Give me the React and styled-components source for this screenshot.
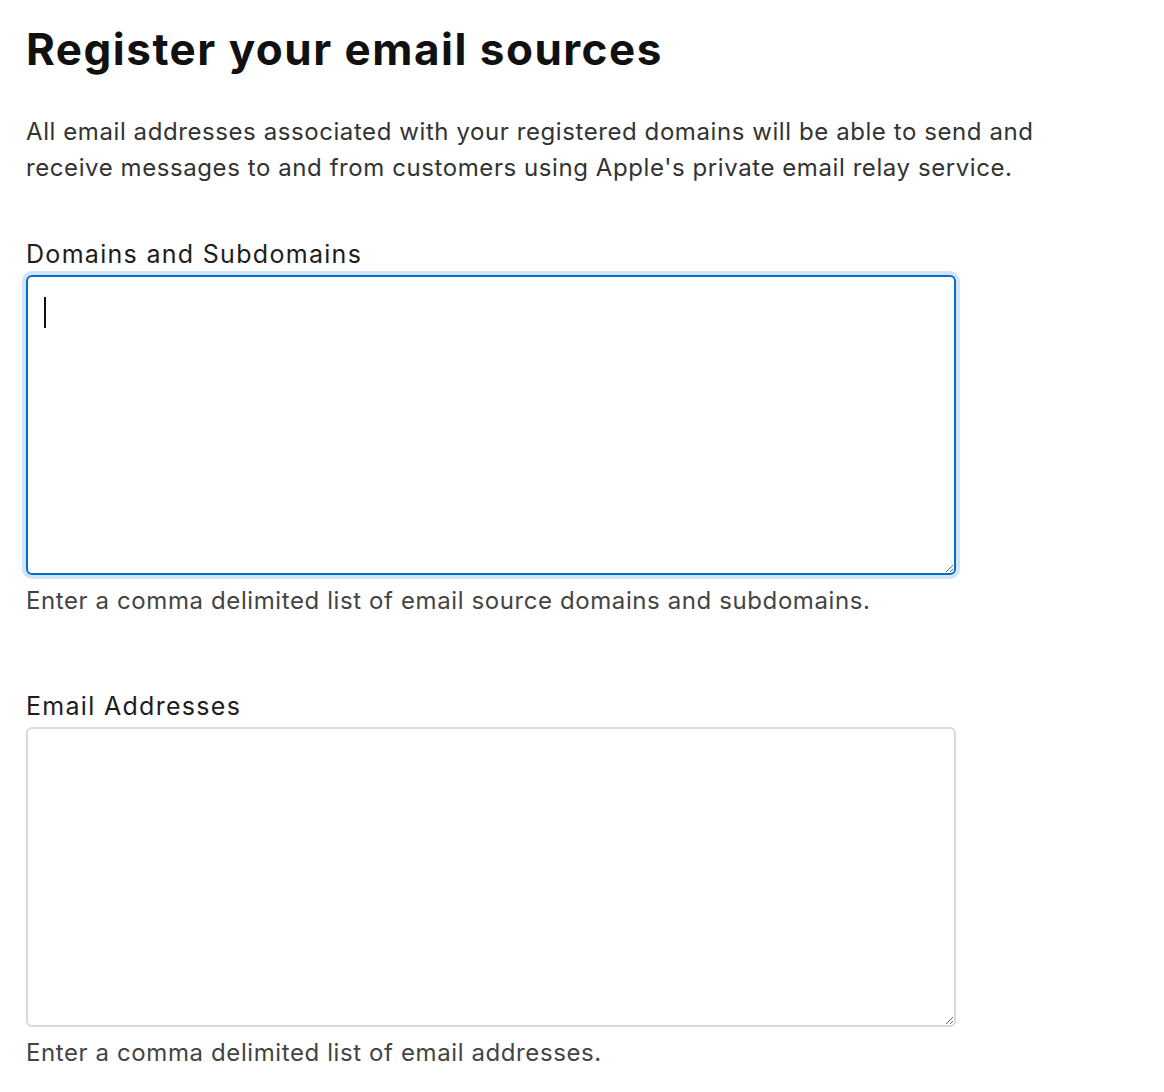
import React from 'react'
import styled, { createGlobalStyle } from 'styled-components'

const GlobalStyle = createGlobalStyle`
    body {
        margin: 0;
        background: #fff;
        font-family: Inter, "Noto Sans", sans-serif;
        -webkit-font-smoothing: antialiased;
    }
`;

function Field({ label, hint, focused }) {
    return (
        <FieldBlock>
            <Label>{label}</Label>
            <AreaWrap>
                <TextArea focused={focused} />
                {focused && <Caret />}
            </AreaWrap>
            <Hint>{hint}</Hint>
        </FieldBlock>
    )
}

export default function App() {
    return (
        <>
            <GlobalStyle />
            <Page>
                <Title>Register your email sources</Title>
                <Intro>
                    All email addresses associated with your registered domains will be able to send and
                    receive messages to and from customers using Apple's private email relay service.
                </Intro>
                <Field
                    label="Domains and Subdomains"
                    hint="Enter a comma delimited list of email source domains and subdomains."
                    focused
                />
                <Field
                    label="Email Addresses"
                    hint="Enter a comma delimited list of email addresses."
                />
            </Page>
        </>
    )
}

const Page = styled.div`
    padding: 22px 0 0 26px;
    width: 930px;
`;

const Title = styled.h1`
    margin: 0;
    font-size: 44px;
    line-height: 54px;
    font-weight: 700;
    color: #111;
    letter-spacing: 1.5px;
`;

const Intro = styled.p`
    margin: 38px 0 0;
    width: 1050px;
    font-size: 24px;
    line-height: 36px;
    color: #333;
    letter-spacing: 0.58px;
`;

const FieldBlock = styled.div`
    margin-top: 52px;
    & + & {
        margin-top: 74px;
    }
`;

const Label = styled.div`
    font-size: 25px;
    line-height: 32px;
    color: #1d1d1f;
    letter-spacing: 1.3px;
    margin-bottom: 5px;
`;

const AreaWrap = styled.div`
    position: relative;
    width: 930px;
`;

const TextArea = styled.textarea`
    display: block;
    box-sizing: border-box;
    width: 930px;
    height: 300px;
    margin: 0;
    padding: 12px 16px;
    border-radius: 6px;
    border: ${(p) => (p.focused ? '2px solid #0071c9' : '2px solid #d9d9d9')};
    box-shadow: ${(p) => (p.focused ? '0 0 0 4px #d4e3f6' : 'none')};
    background: #fff;
    outline: none;
    resize: vertical;
    font-family: inherit;
    font-size: 22px;
`;

const Caret = styled.span`
    position: absolute;
    left: 18px;
    top: 22px;
    width: 2px;
    height: 31px;
    background: #111;
`;

const Hint = styled.div`
    margin-top: 11px;
    font-size: 24px;
    line-height: 30px;
    color: #444;
    letter-spacing: 0.6px;
`;
